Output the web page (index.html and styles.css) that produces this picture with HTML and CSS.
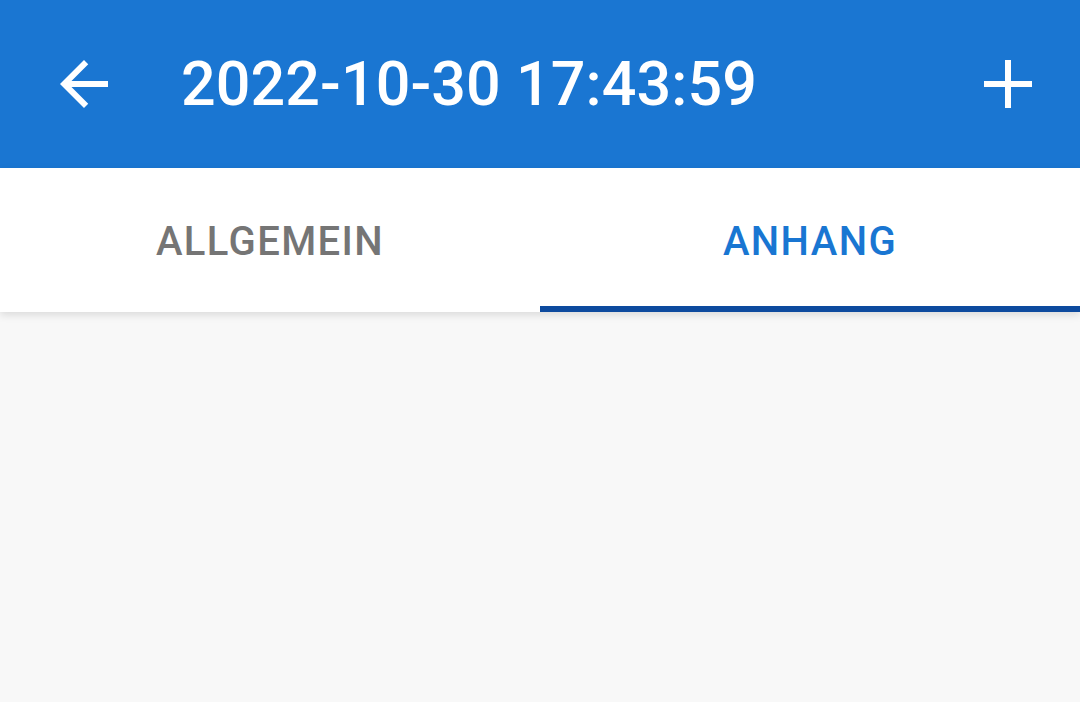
FILE: index.html
```html
<!DOCTYPE html>
<html lang="de">
    <head>
        <meta charset="UTF-8">
        <title>Eintrag</title>
        <link rel="stylesheet" href="styles.css">
    </head>
    <body>

        <header class="appbar">
            <button class="icon-btn back" type="button" aria-label="Zurück">
                <svg width="72" height="72" viewBox="0 0 24 24">
                    <path d="M20 11H7.83l5.59-5.59L12 4l-8 8 8 8 1.41-1.41L7.83 13H20v-2z" fill="#fff"/>
                </svg>
            </button>
            <h1 class="title">2022-10-30 17:43:59</h1>
            <button class="icon-btn add" type="button" aria-label="Hinzufügen">
                <svg width="48" height="48" viewBox="0 0 48 48">
                    <path d="M24 0V48M0 24H48" fill="none" stroke="#fff" stroke-width="6"/>
                </svg>
            </button>
        </header>

        <nav class="tabs">
            <div class="tab">ALLGEMEIN</div>
            <div class="tab active">ANHANG</div>
        </nav>

        <main class="content"></main>

    </body>
</html>
```
FILE: styles.css
```css
html, body {
    margin: 0;
    height: 100%;
}

body {
    font-family: Roboto, "Noto Sans", sans-serif;
    background-color: #f8f8f8;
    display: flex;
    flex-direction: column;
}

.appbar {
    height: 168px;
    background-color: #1a76d2;
    display: flex;
    align-items: center;
    color: #fff;
}

.icon-btn {
    background: none;
    border: none;
    padding: 0;
    display: flex;
    align-items: center;
    justify-content: center;
    cursor: pointer;
}

.back {
    margin-left: 48px;
    width: 72px;
    height: 72px;
}

.title {
    margin: 0 0 0 61px;
    flex: 1;
    font-size: 61px;
    font-weight: 500;
    letter-spacing: 0.1px;
}

.add {
    margin-right: 48px;
    width: 48px;
    height: 48px;
}

.tabs {
    display: flex;
    height: 144px;
    background-color: #fff;
    box-shadow: 0 3px 8px rgba(0, 0, 0, 0.12);
    position: relative;
    z-index: 1;
}

.tab {
    flex: 1;
    display: flex;
    align-items: center;
    justify-content: center;
    font-size: 40px;
    font-weight: 500;
    letter-spacing: 1.4px;
    color: #757575;
    border-bottom: 6px solid transparent;
    padding-top: 8px;
}

.tab.active {
    color: #1976d2;
    border-bottom-color: #0d4a9e;
}

.content {
    flex: 1;
}
```
